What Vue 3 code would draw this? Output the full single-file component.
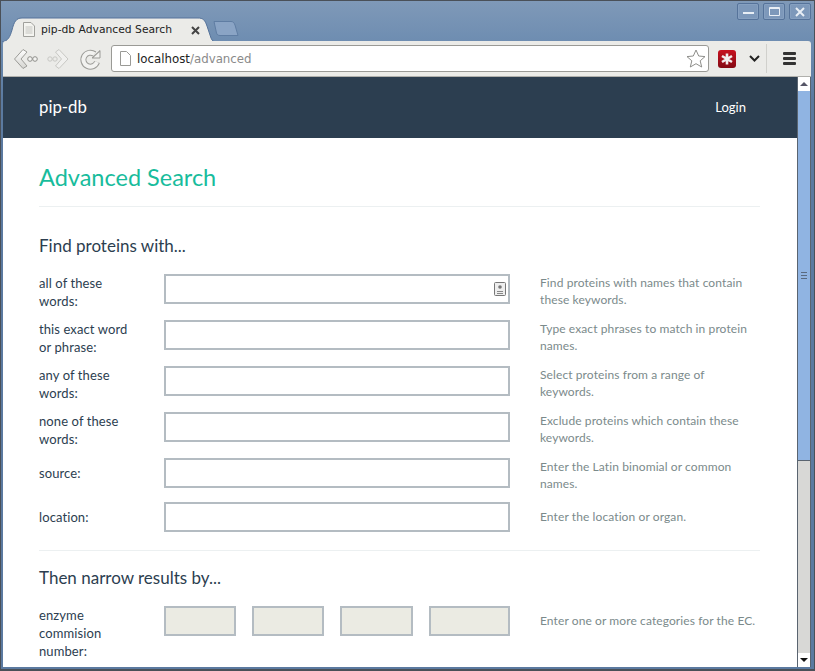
<script setup>
const rows = [
  { label: 'all of these words:', hint: 'Find proteins with names that contain these keywords.', icon: true },
  { label: 'this exact word or phrase:', hint: 'Type exact phrases to match in protein names.' },
  { label: 'any of these words:', hint: 'Select proteins from a range of keywords.' },
  { label: 'none of these words:', hint: 'Exclude proteins which contain these keywords.' },
  { label: 'source:', hint: 'Enter the Latin binomial or common names.', short: true },
  { label: 'location:', hint: 'Enter the location or organ.', short: true, shortHint: true }
]
</script>

<template>
  <div class="window">
    <div class="titlebar">
      <div class="tab">
        <svg class="tab-shape" width="215" height="25" viewBox="0 0 215 25">
          <path d="M0 25C6 24 8 20 10 13C12 5 14 1 20 1H196C201 1 203 3 205 9L209 21C210 24 212 25 215 25Z" fill="#ebebe8" stroke="#56739a" />
        </svg>
        <svg class="tab-icon" width="14" height="17" viewBox="0 0 14 17">
          <path d="M1.500 1.500h7.500l3.500 3.500v10.500h-11z" fill="#f4f4f0" stroke="#a0a09c" />
          <path d="M3.500 6h7M3.500 8h7M3.500 10h7M3.500 12h7" stroke="#c4c4c0" />
        </svg>
        <span class="tab-title">pip-db Advanced Search</span>
        <svg class="tab-close" width="9" height="9" viewBox="0 0 9 9"><path d="M1 1l7 7M8 1l-7 7" stroke="#444" stroke-width="2" /></svg>
      </div>
      <svg class="new-tab" width="26" height="17" viewBox="0 0 26 17">
        <path d="M1 1.500H18C20 1.500 21 2.500 22 5L25 15.500H7C5 15.500 4 14.500 3.500 13Z" fill="#8aa4c5" stroke="#5f7da3" />
      </svg>
      <div class="win-buttons">
        <div class="win-btn"><span class="min-glyph"></span></div>
        <div class="win-btn"><span class="max-glyph"></span></div>
        <div class="win-btn">
          <svg width="12" height="12" viewBox="0 0 12 12"><path d="M2 2l8 8M10 2l-8 8" stroke="#e8eef5" stroke-width="2" /></svg>
        </div>
      </div>
    </div>

    <div class="toolbar">
      <svg class="nav-back" width="25" height="22" viewBox="0 0 25 22">
        <defs>
          <linearGradient id="btnfill" x1="0" y1="0" x2="0" y2="1">
            <stop offset="0" stop-color="#fff" />
            <stop offset="1" stop-color="#d4d4d0" />
          </linearGradient>
        </defs>
        <path d="M10 1.500L1.500 11L10 20.500L14 18L8 11L14 4Z" fill="url(#btnfill)" stroke="#9c9c98" stroke-linejoin="round" />
        <circle cx="17" cy="11" r="2.300" fill="#f4f4f2" stroke="#8e8e8a" />
        <circle cx="22" cy="11" r="2.300" fill="#f4f4f2" stroke="#8e8e8a" />
      </svg>
      <svg class="nav-forward" width="23" height="22" viewBox="0 0 23 22">
        <path d="M12 1.500L21 11L12 20.500L8.500 18L14.500 11L8.500 4Z" fill="#f0f0ee" stroke="#c8c8c4" stroke-linejoin="round" />
        <circle cx="3" cy="11" r="2.200" fill="none" stroke="#c8c8c4" />
        <circle cx="8" cy="11" r="2.200" fill="none" stroke="#c8c8c4" />
      </svg>
      <svg class="nav-reload" width="22" height="22" viewBox="0 0 22 22">
        <path d="M17 14A7 7 0 1 1 14.500 6" fill="none" stroke="#9c9c98" stroke-width="6" />
        <path d="M12 10L20 2.500V10Z" fill="#9c9c98" stroke="#9c9c98" stroke-linejoin="round" />
        <path d="M17 14A7 7 0 1 1 14.500 6" fill="none" stroke="#f2f2f0" stroke-width="4" />
        <path d="M13.500 9.500L19.500 4V9.500Z" fill="#f2f2f0" />
      </svg>
      <div class="omnibox">
        <svg width="12" height="15" viewBox="0 0 12 15">
          <path d="M1.500 .5h6l4 4v10h-10z" fill="#fff" stroke="#9a9a96" />
        </svg>
        <span class="url"><span class="url-host">localhost</span>/advanced</span>
        <svg class="star" width="20" height="19" viewBox="0 0 20 19">
          <path d="M10 1l2.700 6 6.300.6-4.800 4.200 1.500 6.200L10 14.700 4.300 18l1.500-6.200L1 7.600 7.300 7z" fill="#fff" stroke="#8e8e8a" />
        </svg>
      </div>
      <svg class="lastpass" width="18" height="18" viewBox="0 0 18 18">
        <defs>
          <linearGradient id="lpfill" x1="0" y1="0" x2="0" y2="1">
            <stop offset="0" stop-color="#c8101e" />
            <stop offset="1" stop-color="#840a14" />
          </linearGradient>
        </defs>
        <rect width="18" height="18" rx="3" fill="url(#lpfill)" />
        <path d="M9 3.500v11M4 6l10 6M14 6L4 12" stroke="#f2eeee" stroke-width="2.600" />
      </svg>
      <svg class="chevron" width="11" height="7" viewBox="0 0 11 7"><path d="M1 1l4.500 4.500L10 1" fill="none" stroke="#222" stroke-width="2" /></svg>
      <div class="tool-sep"></div>
      <div class="menu"><span></span><span></span><span></span></div>
    </div>

    <div class="viewport">
      <div class="page">
        <nav class="navbar">
          <a class="brand">pip-db</a>
          <a class="login">Login</a>
        </nav>
        <main class="content">
          <h1>Advanced Search</h1>
          <hr class="rule-top" />
          <h2>Find proteins with...</h2>
          <div class="form-rows">
            <div class="row" v-for="row in rows" :key="row.label">
              <label :class="{ short: row.short }">{{ row.label }}</label>
              <div class="field">
                <svg v-if="row.icon" class="field-icon" width="12" height="14" viewBox="0 0 12 14">
                  <rect x=".5" y=".5" width="11" height="13" rx="1" fill="#eee" stroke="#777" />
                  <circle cx="6" cy="5" r="1.800" fill="#777" />
                  <path d="M3 9.500h6M3 11.500h6" stroke="#888" />
                </svg>
              </div>
              <p class="hint" :class="{ short: row.shortHint }">{{ row.hint }}</p>
            </div>
          </div>
          <hr class="rule-mid" />
          <h2>Then narrow results by...</h2>
          <div class="row ec-row">
            <label>enzyme commision number:</label>
            <div class="ec-fields">
              <div class="ec-field"></div>
              <div class="ec-field"></div>
              <div class="ec-field"></div>
              <div class="ec-field"></div>
            </div>
            <p class="hint">Enter one or more categories for the EC.</p>
          </div>
        </main>
      </div>
      <div class="scrollbar">
        <div class="sb-btn"><span class="arrow-up"></span></div>
        <div class="sb-track">
          <div class="sb-thumb"><span class="grip"></span></div>
        </div>
        <div class="sb-btn"><span class="arrow-down"></span></div>
      </div>
    </div>
  </div>
</template>

<style>
html, body {
  margin: 0;
  overflow: hidden;
}
</style>

<style scoped>
.window {
  width: 815px;
  height: 671px;
  box-sizing: border-box;
  display: flex;
  flex-direction: column;
  overflow: hidden;
  background: linear-gradient(#7f99b8 0, #6e8db1 40px, #5b7aa0 100px);
  border: 1px solid #4a5058;
  border-bottom-width: 2px;
  padding-bottom: 2px;
  font-family: "DejaVu Sans", sans-serif;
}

.titlebar {
  height: 40px;
  flex-shrink: 0;
  display: flex;
  align-items: flex-end;
  padding-left: 1px;
}
.tab {
  width: 215px;
  height: 25px;
  display: flex;
  align-items: center;
  padding: 0 17px 0 20px;
  box-sizing: border-box;
  position: relative;
  top: 1px;
}
.tab-shape {
  position: absolute;
  left: 0;
  top: 0;
}
.tab-icon {
  margin-right: 5px;
  flex-shrink: 0;
  position: relative;
}
.tab-title {
  font-size: 10.750px;
  color: #222;
  white-space: nowrap;
  flex: 1;
  position: relative;
}
.tab-close {
  position: relative;
  margin-top: 1px;
}
.new-tab {
  margin-bottom: 4px;
  margin-left: -4px;
}
.win-buttons {
  margin-left: auto;
  align-self: flex-start;
  margin-top: 2px;
  margin-right: 3px;
  display: flex;
  gap: 4px;
}
.win-btn {
  width: 22px;
  height: 17px;
  box-sizing: border-box;
  border: 1px solid #56739a;
  box-shadow: inset 0 0 0 1px #86a0c0;
  border-radius: 2px;
  background: #7d98ba;
  display: flex;
  align-items: center;
  justify-content: center;
}
.min-glyph {
  width: 11px;
  height: 2px;
  background: #e8eef5;
  margin-top: 3px;
}
.max-glyph {
  width: 9px;
  height: 6px;
  border: 1px solid #e8eef5;
  border-top-width: 2px;
  border-radius: 1px;
}

.toolbar {
  height: 36px;
  flex-shrink: 0;
  margin: 0 3px 0 2px;
  box-sizing: border-box;
  background: #ebebe8;
  border-radius: 3px 3px 0 0;
  border-bottom: 1px solid #b0b0ac;
  display: flex;
  align-items: center;
  padding-left: 10px;
  position: relative;
}
.nav-forward {
  margin-left: 9px;
}
.nav-reload {
  margin-left: 10px;
}
.omnibox {
  width: 598px;
  height: 27px;
  margin-left: 9px;
  box-sizing: border-box;
  background: #fff;
  border: 1px solid #9a9a96;
  border-radius: 3px;
  display: flex;
  align-items: center;
  padding: 0 2px 0 7px;
}
.url {
  margin-left: 6px;
  font-size: 11.800px;
  color: #8a8a8a;
  flex: 1;
}
.url-host {
  color: #222;
}
.lastpass {
  margin-left: 9px;
}
.chevron {
  margin-left: 13px;
}
.tool-sep {
  width: 1px;
  height: 29px;
  background: #d0d0cc;
  margin-left: 6px;
}
.menu {
  margin-left: 16px;
  display: flex;
  flex-direction: column;
  gap: 2px;
}
.menu span {
  display: block;
  width: 13px;
  height: 3px;
  background: #333;
  border-radius: 1px;
}

.viewport {
  flex: 1;
  min-height: 0;
  display: flex;
  margin: 0 3px 0 2px;
}
.page {
  flex: 1;
  min-width: 0;
  overflow: hidden;
  background: #fff;
  font-family: Lato, sans-serif;
  color: #2c3e50;
}
.navbar {
  height: 61px;
  box-sizing: border-box;
  background: #2c3e50;
  display: flex;
  align-items: center;
  justify-content: space-between;
  padding: 0 51px 2px 36px;
  color: #fff;
}
.brand {
  font-size: 16.800px;
}
.login {
  font-size: 13px;
}
.content {
  padding: 0 36px;
  width: 721px;
}
h1 {
  margin: 0;
  padding-top: 24px;
  font-size: 23.500px;
  line-height: 30px;
  font-weight: 400;
  color: #18bc9c;
}
hr {
  border: 0;
  border-top: 1px solid #ecf0f1;
  margin: 0;
}
.rule-top {
  margin-top: 14px;
}
h2 {
  margin: 0;
  font-size: 17px;
  line-height: 22px;
  font-weight: 400;
}
.rule-top + h2 {
  margin-top: 28px;
}
.form-rows {
  margin-top: 17px;
}
.row {
  display: grid;
  grid-template-columns: 125px 346px 250px;
  height: 46px;
}
.row:nth-child(5) {
  height: 44px;
}
.row:last-child {
  height: 30px;
}
label {
  font-size: 13px;
  line-height: 18px;
  letter-spacing: .1px;
  padding-right: 25px;
}
label.short {
  padding-top: 6px;
}
.field {
  height: 30px;
  box-sizing: border-box;
  border: 2px solid #b4bcc2;
  position: relative;
}
.field-icon {
  position: absolute;
  right: 2px;
  top: 6px;
}
.hint {
  margin: 0 0 0 30px;
  font-size: 12px;
  line-height: 17px;
  letter-spacing: .1px;
  color: #7b8a8b;
}
.hint.short {
  padding-top: 6px;
}
.rule-mid {
  margin-top: 18px;
}
.rule-mid + h2 {
  margin-top: 16px;
}
.ec-row {
  margin-top: 17px;
  height: auto;
}
.ec-fields {
  display: grid;
  grid-template-columns: 72px 72px 73px 1fr;
  column-gap: 16px;
}
.ec-field {
  height: 30px;
  box-sizing: border-box;
  background: #ebebe3;
  border: 2px solid #b4bcc2;
}
.ec-row .hint {
  margin-top: 6px;
  white-space: nowrap;
}

.scrollbar {
  width: 12px;
  flex-shrink: 0;
  background: #d8d8d6;
  border-left: 1px solid #5a6470;
  border-right: 1px solid #5a6470;
  display: flex;
  flex-direction: column;
}
.sb-btn {
  height: 14px;
  background: #fff;
  display: flex;
  align-items: center;
  justify-content: center;
  flex-shrink: 0;
}
.arrow-up {
  border: 4px solid transparent;
  border-top: 0;
  border-bottom: 4px solid #556;
}
.arrow-down {
  border: 4px solid transparent;
  border-bottom: 0;
  border-top: 4px solid #111;
}
.sb-track {
  flex: 1;
}
.sb-thumb {
  height: 369px;
  background: #90b4e2;
  border-bottom: 1px solid #5a6470;
  display: flex;
  align-items: center;
  justify-content: center;
}
.grip {
  width: 6px;
  height: 5px;
  border-top: 1px solid #5a6a80;
  border-bottom: 1px solid #5a6a80;
  background: linear-gradient(#5a6a80, #5a6a80) center / 6px 1px no-repeat;
}
</style>
